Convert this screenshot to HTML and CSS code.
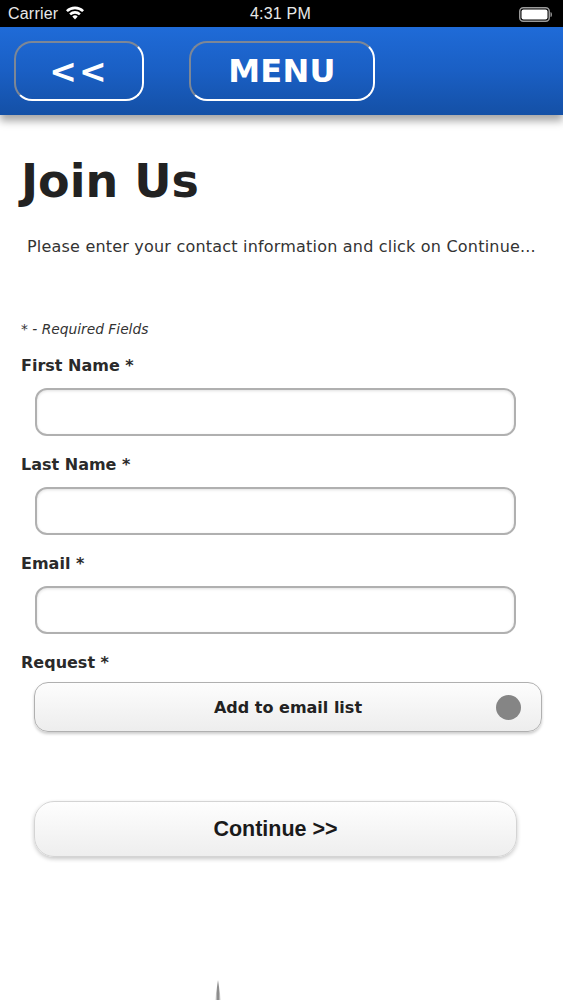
FILE: index.html
```html
<!DOCTYPE html>
<html>
<head>
<meta charset="utf-8">
<link rel="stylesheet" href="styles.css">
</head>
<body>
<div class="status">
  <div class="status-left">
    <span class="carrier">Carrier</span>
    <svg class="wifi" width="20" height="15" viewBox="0 0 20 15">
      <path d="M1 5.2 A13 13 0 0 1 19 5.2 L17.2 7.1 A10.4 10.4 0 0 0 2.8 7.1 Z" fill="#fff"/>
      <path d="M4.2 8.4 A8.4 8.4 0 0 1 15.8 8.4 L14 10.3 A5.8 5.8 0 0 0 6 10.3 Z" fill="#fff"/>
      <path d="M7.3 11.6 A3.9 3.9 0 0 1 12.7 11.6 L10 14.4 Z" fill="#fff"/>
    </svg>
  </div>
  <div class="time">4:31 PM</div>
  <div class="status-right">
    <svg width="34" height="15" viewBox="0 0 34 15">
      <rect x="0.75" y="0.75" width="29.5" height="13.5" rx="3.5" fill="none" stroke="#9a9a9a" stroke-width="1.5"/>
      <rect x="2.5" y="2.5" width="26" height="10" rx="2" fill="#fff"/>
      <path d="M31.5 5 a1.5 2.5 0 0 1 0 5 z" fill="#9a9a9a"/>
    </svg>
  </div>
</div>
<header class="topbar">
  <div class="navbtn back">&lt;&lt;</div>
  <div class="navbtn menu">MENU</div>
</header>
<main class="content">
  <h1 class="title">Join Us</h1>
  <p class="intro">Please enter your contact information and click on Continue...</p>
  <p class="required">* - Required Fields</p>
  <form class="form">
    <label class="label">First Name *</label>
    <div class="input"></div>
    <label class="label">Last Name *</label>
    <div class="input"></div>
    <label class="label">Email *</label>
    <div class="input"></div>
    <label class="label label-req">Request *</label>
    <div class="select"><span class="select-text">Add to email list</span><span class="dot"></span></div>
    <div class="continue">Continue &gt;&gt;</div>
  </form>
  <div class="spike"></div>
</main>
</body>
</html>
```
FILE: styles.css
```css
html, body {
  margin: 0;
  padding: 0;
  background: #fff;
  overflow: hidden;
}
body {
  width: 563px;
  height: 1000px;
  font-family: "DejaVu Sans", Verdana, sans-serif;
  color: #222;
}
.status {
  height: 27px;
  background: #000;
  display: flex;
  align-items: center;
  justify-content: space-between;
  padding: 0 10px 0 8px;
  color: #e8e8e8;
  font-family: "Liberation Sans", Arial, sans-serif;
  font-size: 16px;
}
.status-left {
  display: flex;
  align-items: center;
  gap: 7px;
  width: 120px;
}
.carrier { letter-spacing: 0.2px; }
.wifi { margin-top: -2px; }
.time {
  flex: 1;
  text-align: center;
  letter-spacing: 0.2px;
}
.status-right {
  width: 120px;
  display: flex;
  justify-content: flex-end;
  padding-top: 1px;
}
.topbar {
  height: 88px;
  background: linear-gradient(#1f6bd8 0%, #1a5fc4 50%, #1450a6 100%);
  box-shadow: 0 6px 8px rgba(0,0,0,0.35);
  display: flex;
  align-items: flex-start;
  padding: 14px 0 0 14px;
  box-sizing: border-box;
  gap: 45px;
}
.navbtn {
  height: 60px;
  box-sizing: border-box;
  border: 2px solid #fff;
  border-top-color: #7d8796;
  border-left-color: #7d8796;
  border-radius: 18px;
  display: flex;
  align-items: center;
  justify-content: center;
  color: #fff;
  font-weight: bold;
  font-family: "DejaVu Sans", Verdana, sans-serif;
}
.back {
  width: 130px;
  font-size: 33px;
  letter-spacing: 2px;
}
.menu {
  width: 186px;
  font-size: 32px;
  letter-spacing: 0.3px;
}
.content {
  padding: 0 0 0 21px;
}
.title {
  margin: 39px 0 0 0;
  font-size: 46px;
  line-height: 54px;
  font-weight: bold;
  color: #222;
}
.intro {
  margin: 29px 0 0 6px;
  font-size: 16px;
  line-height: 20px;
  letter-spacing: 0.2px;
  color: #333;
}
.required {
  margin: 64px 0 0 0;
  font-size: 13.8px;
  line-height: 16px;
  font-style: italic;
  color: #333;
}
.form {
  display: flex;
  flex-direction: column;
  align-items: flex-start;
  margin: 19px 0 0 0;
}
.label {
  font-size: 16px;
  line-height: 20px;
  font-weight: bold;
  color: #2a2a2a;
  margin-bottom: 12px;
}
.input {
  margin-left: 14px;
  width: 481px;
  height: 48px;
  box-sizing: border-box;
  border: 2px solid #b0b0b0;
  border-radius: 12px;
  background: #fff;
  box-shadow: inset 0 1px 3px rgba(0,0,0,0.12);
  margin-bottom: 19px;
}
.label-req { margin-bottom: 9px; }
.select {
  margin-left: 13px;
  width: 508px;
  height: 50px;
  box-sizing: border-box;
  border: 1px solid #b0b0b0;
  border-radius: 14px;
  background: linear-gradient(#fdfdfd, #ededed);
  box-shadow: 0 2px 3px rgba(0,0,0,0.2);
  display: flex;
  align-items: center;
  justify-content: center;
  position: relative;
}
.select-text {
  font-size: 16px;
  font-weight: bold;
  color: #222;
}
.dot {
  position: absolute;
  right: 20px;
  top: 12px;
  width: 25px;
  height: 25px;
  border-radius: 50%;
  background: #858585;
}
.continue {
  margin: 69px 0 0 13px;
  width: 483px;
  height: 56px;
  box-sizing: border-box;
  border: 1px solid #d4d4d4;
  border-radius: 20px;
  background: linear-gradient(#fefefe, #eeeeee);
  box-shadow: 0 2px 4px rgba(0,0,0,0.22);
  display: flex;
  align-items: center;
  justify-content: center;
  font-family: "Liberation Sans", Arial, sans-serif;
  font-weight: bold;
  font-size: 21.5px;
  color: #1a1a1a;
}
.spike {
  margin: 123px 0 0 194px;
  width: 6px;
  height: 20px;
  background: linear-gradient(to right, rgba(120,120,120,0), #777 50%, rgba(120,120,120,0));
  clip-path: polygon(50% 0, 100% 100%, 0 100%);
}
```
